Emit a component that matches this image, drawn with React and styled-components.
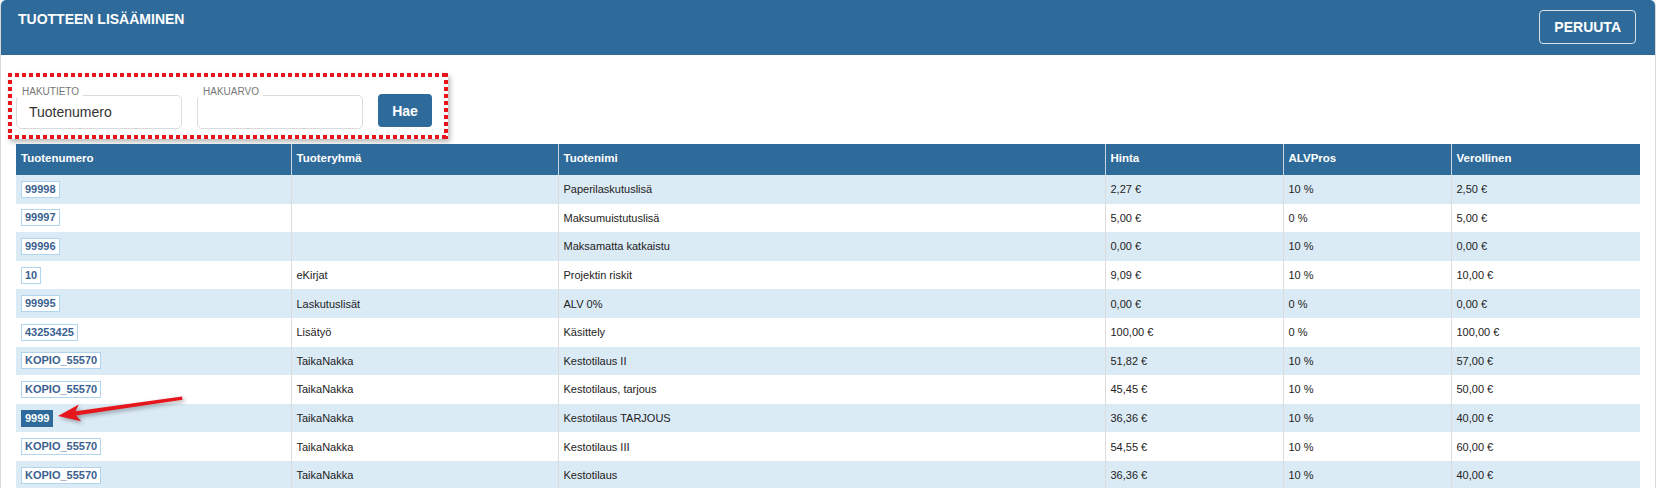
import styled, { createGlobalStyle } from 'styled-components'

const GlobalStyle = createGlobalStyle`
  body {
    margin: 0;
    background: #fff;
    font-family: "Liberation Sans", Arial, sans-serif;
  }
`

const BLUE = '#2f6b9a'

const rows = [
  { nro: '99998', ryhma: '', nimi: 'Paperilaskutuslisä', hinta: '2,27 €', alv: '10 %', verollinen: '2,50 €' },
  { nro: '99997', ryhma: '', nimi: 'Maksumuistutuslisä', hinta: '5,00 €', alv: '0 %', verollinen: '5,00 €' },
  { nro: '99996', ryhma: '', nimi: 'Maksamatta katkaistu', hinta: '0,00 €', alv: '10 %', verollinen: '0,00 €' },
  { nro: '10', ryhma: 'eKirjat', nimi: 'Projektin riskit', hinta: '9,09 €', alv: '10 %', verollinen: '10,00 €' },
  { nro: '99995', ryhma: 'Laskutuslisät', nimi: 'ALV 0%', hinta: '0,00 €', alv: '0 %', verollinen: '0,00 €' },
  { nro: '43253425', ryhma: 'Lisätyö', nimi: 'Käsittely', hinta: '100,00 €', alv: '0 %', verollinen: '100,00 €' },
  { nro: 'KOPIO_55570', ryhma: 'TaikaNakka', nimi: 'Kestotilaus II', hinta: '51,82 €', alv: '10 %', verollinen: '57,00 €' },
  { nro: 'KOPIO_55570', ryhma: 'TaikaNakka', nimi: 'Kestotilaus, tarjous', hinta: '45,45 €', alv: '10 %', verollinen: '50,00 €' },
  { nro: '9999', ryhma: 'TaikaNakka', nimi: 'Kestotilaus TARJOUS', hinta: '36,36 €', alv: '10 %', verollinen: '40,00 €', active: true },
  { nro: 'KOPIO_55570', ryhma: 'TaikaNakka', nimi: 'Kestotilaus III', hinta: '54,55 €', alv: '10 %', verollinen: '60,00 €' },
  { nro: 'KOPIO_55570', ryhma: 'TaikaNakka', nimi: 'Kestotilaus', hinta: '36,36 €', alv: '10 %', verollinen: '40,00 €' },
]

const columns = [
  { label: 'Tuotenumero', width: 275 },
  { label: 'Tuoteryhmä', width: 267 },
  { label: 'Tuotenimi', width: 547 },
  { label: 'Hinta', width: 178 },
  { label: 'ALVPros', width: 168 },
  { label: 'Verollinen', width: 189 },
]

const App = () => {
  return (
    <>
      <GlobalStyle />
      <Panel>
        <Header>
          <Title>Tuotteen lisääminen</Title>
          <GhostButton>PERUUTA</GhostButton>
        </Header>
        <Body>
          <SearchBox>
            <Field>
              <FieldLabel>HAKUTIETO</FieldLabel>
              Tuotenumero
            </Field>
            <Field>
              <FieldLabel>HAKUARVO</FieldLabel>
            </Field>
            <SearchButton>Hae</SearchButton>
          </SearchBox>

          <TableWrap>
            <Table>
              <colgroup>
                {columns.map(c => <col key={c.label} style={{ width: c.width }} />)}
              </colgroup>
              <thead>
                <tr>
                  {columns.map(c => <Th key={c.label}>{c.label}</Th>)}
                </tr>
              </thead>
              <tbody>
                {rows.map((r, i) => (
                  <Row key={i} $striped={i % 2 === 0}>
                    <Td><Badge $active={r.active}>{r.nro}</Badge></Td>
                    <Td>{r.ryhma}</Td>
                    <Td>{r.nimi}</Td>
                    <Td>{r.hinta}</Td>
                    <Td>{r.alv}</Td>
                    <Td>{r.verollinen}</Td>
                  </Row>
                ))}
              </tbody>
            </Table>

            <Arrow viewBox="0 0 160 40" width="160" height="40">
              <polygon
                points="12,27 32.8,15.4 29.5,22.2 136,7.6 136.5,10.8 30,26.4 35.2,32.2"
                fill="#e5161c"
              />
            </Arrow>
          </TableWrap>
        </Body>
      </Panel>
    </>
  )
}

const Panel = styled.div`
  width: 1656px;
  min-height: 488px;
  box-sizing: border-box;
  border: 1px solid #d9d9d9;
  border-top: none;
  border-radius: 5px 5px 0 0;
  overflow: hidden;
`

const Header = styled.header`
  height: 55px;
  box-sizing: border-box;
  padding: 10px 19px 0 17px;
  display: flex;
  justify-content: space-between;
  align-items: flex-start;
  background: ${BLUE};
  border-radius: 5px 5px 0 0;
`

const Title = styled.h1`
  margin: 0;
  font-size: 14px;
  line-height: 18px;
  font-weight: bold;
  color: #fff;
  text-transform: uppercase;
`

const GhostButton = styled.button`
  height: 34px;
  padding: 0 14px;
  border: 1px solid rgba(255, 255, 255, 0.8);
  border-radius: 4px;
  background: transparent;
  color: #fff;
  font-family: inherit;
  font-size: 14px;
  font-weight: bold;
`

const Body = styled.main`
  padding: 18px 15px 0;
`

const dots = (dir) => `repeating-linear-gradient(${dir}, #e8141b 0 4px, transparent 4px 7px)`

const SearchBox = styled.div`
  width: 440px;
  height: 66px;
  margin-left: -8px;
  box-sizing: border-box;
  padding: 22px 0 0 8px;
  display: flex;
  align-items: flex-start;
  gap: 15px;
  background:
    ${dots('90deg')} top left / 100% 4px no-repeat,
    ${dots('90deg')} bottom left / 100% 4px no-repeat,
    ${dots('180deg')} top left / 4px 100% no-repeat,
    ${dots('180deg')} top right / 4px 100% no-repeat,
    #fff;
  box-shadow: 2px 3px 5px rgba(0, 0, 0, 0.28);
`

const Field = styled.div`
  position: relative;
  width: 166px;
  height: 34px;
  box-sizing: border-box;
  padding: 0 12px;
  border: 1px solid #dcdcdc;
  border-radius: 5px;
  font-size: 14px;
  line-height: 32px;
  color: #333;
`

const FieldLabel = styled.span`
  position: absolute;
  top: -10px;
  left: -1px;
  padding: 0 4px 0 6px;
  background: #fff;
  font-size: 10px;
  line-height: 11px;
  color: #777;
`

const SearchButton = styled.button`
  width: 54px;
  height: 33px;
  margin-top: -1px;
  border: none;
  border-radius: 4px;
  background: ${BLUE};
  color: #fff;
  font-family: inherit;
  font-size: 14px;
  font-weight: bold;
`

const TableWrap = styled.div`
  position: relative;
  width: 1624px;
  margin-top: 5px;
`

const Table = styled.table`
  width: 1624px;
  table-layout: fixed;
  border-collapse: collapse;
  font-size: 11px;
  color: #222;
`

const Th = styled.th`
  height: 28px;
  padding: 0 5px 3px;
  background: ${BLUE};
  color: #fff;
  font-size: 11.5px;
  font-weight: bold;
  text-align: left;
  & + & {
    border-left: 1px solid #c9d6e2;
  }
`

const Row = styled.tr`
  background: ${p => (p.$striped ? '#dbebf6' : '#fff')};
`

const Td = styled.td`
  height: 28.6px;
  padding: 0 5px;
  vertical-align: middle;
  white-space: nowrap;
  & + & {
    border-left: 1px solid #dcdcdc;
  }
`

const Badge = styled.span`
  display: inline-block;
  padding: 1px 3px;
  border: 1px solid ${p => (p.$active ? BLUE : '#b2d5ee')};
  background: ${p => (p.$active ? BLUE : '#fff')};
  color: ${p => (p.$active ? '#fff' : '#3a6190')};
  font-weight: bold;
  line-height: 13px;
`

const Arrow = styled.svg`
  position: absolute;
  left: 30px;
  top: 245px;
  overflow: visible;
  filter: drop-shadow(2px 2px 2px rgba(0, 0, 0, 0.35));
`

export default App
